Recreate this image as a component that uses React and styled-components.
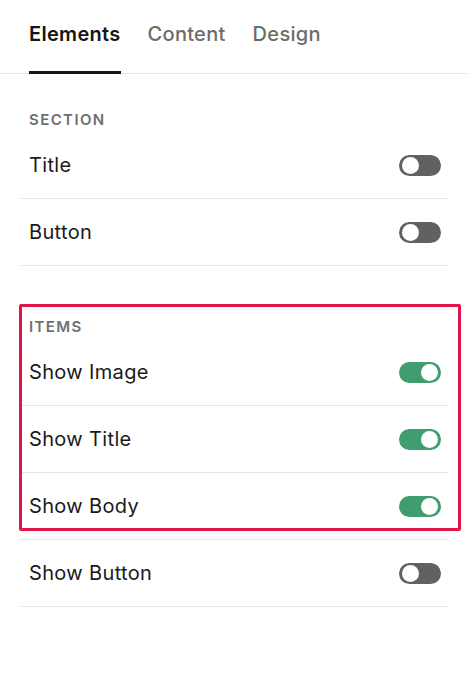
import React, { useState } from 'react';
import styled, { createGlobalStyle } from 'styled-components';

const GlobalStyle = createGlobalStyle`
  * { box-sizing: border-box; }
  body {
    margin: 0;
    background: #ffffff;
    font-family: Inter, "Liberation Sans", Arial, sans-serif;
    color: #1a1a1a;
  }
`;

const Page = styled.div`
  width: 468px;
  min-height: 700px;
  background: #fff;
`;

const TabBar = styled.div`
  display: flex;
  gap: 27px;
  height: 74px;
  padding-left: 29px;
  border-bottom: 1px solid #e6e6e6;
`;

const Tab = styled.div`
  height: 74px;
  margin-bottom: -1px;
  padding-top: 22px;
  font-size: 20px;
  line-height: 24px;
  letter-spacing: 0.3px;
  font-weight: ${p => (p.active ? 600 : 500)};
  color: ${p => (p.active ? '#151515' : '#6b6b6b')};
  border-bottom: 3px solid ${p => (p.active ? '#151515' : 'transparent')};
`;

const Panel = styled.div`
  padding: 0 20px;
`;

const Group = styled.div`
  position: relative;
  margin-top: ${p => p.top}px;
`;

const GroupLabel = styled.div`
  padding-left: 9px;
  margin-bottom: 3px;
  font-size: 15px;
  line-height: 18px;
  font-weight: 600;
  letter-spacing: 1.4px;
  color: #707070;
`;

const Row = styled.div`
  display: flex;
  align-items: center;
  justify-content: space-between;
  height: 67px;
  padding: 0 7px 0 9px;
  border-bottom: 1px solid #e6e6e6;
  font-size: 20px;
  letter-spacing: 0.35px;
  color: #1a1a1a;
`;

const Track = styled.button`
  position: relative;
  width: 42px;
  height: 21px;
  padding: 0;
  border: none;
  border-radius: 11px;
  background: ${p => (p.on ? '#409d70' : '#616161')};
  cursor: pointer;
`;

const Knob = styled.span`
  position: absolute;
  top: 2px;
  left: ${p => (p.on ? '22px' : '3px')};
  width: 17px;
  height: 17px;
  border-radius: 50%;
  background: #fff;
`;

const Highlight = styled.div`
  position: absolute;
  top: -14px;
  bottom: 9px;
  left: -1px;
  right: -13px;
  border: 3px solid #e3164b;
  border-radius: 2px;
  pointer-events: none;
`;

function Toggle({ on, onClick }) {
  return (
    <Track on={on ? 1 : 0} onClick={onClick}>
      <Knob on={on ? 1 : 0} />
    </Track>
  );
}

export default function App() {
  const [values, setValues] = useState({
    title: false,
    button: false,
    image: true,
    itemTitle: true,
    body: true,
    itemButton: false,
  });
  const flip = key => setValues(v => ({ ...v, [key]: !v[key] }));

  return (
    <Page>
      <GlobalStyle />
      <TabBar>
        <Tab active>Elements</Tab>
        <Tab>Content</Tab>
        <Tab>Design</Tab>
      </TabBar>
      <Panel>
        <Group top={37}>
          <GroupLabel>SECTION</GroupLabel>
          <Row>Title<Toggle on={values.title} onClick={() => flip('title')} /></Row>
          <Row>Button<Toggle on={values.button} onClick={() => flip('button')} /></Row>
        </Group>
        <Group top={52}>
          <GroupLabel>ITEMS</GroupLabel>
          <Row>Show Image<Toggle on={values.image} onClick={() => flip('image')} /></Row>
          <Row>Show Title<Toggle on={values.itemTitle} onClick={() => flip('itemTitle')} /></Row>
          <Row>Show Body<Toggle on={values.body} onClick={() => flip('body')} /></Row>
          <Highlight />
        </Group>
        <Row>Show Button<Toggle on={values.itemButton} onClick={() => flip('itemButton')} /></Row>
      </Panel>
    </Page>
  );
}
